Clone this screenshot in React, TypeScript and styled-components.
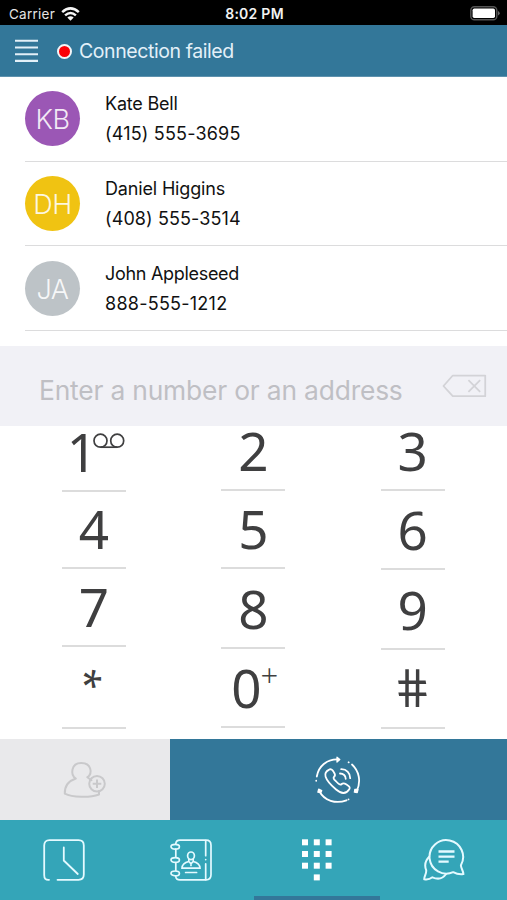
import React from "react";
import styled, { createGlobalStyle } from "styled-components";

const Global = createGlobalStyle`
  * { box-sizing: border-box; }
  body { margin: 0; background: #fff; font-family: Inter, "Liberation Sans", sans-serif; }
`;

const Screen = styled.main`
  width: 507px;
  height: 900px;
  display: flex;
  flex-direction: column;
  overflow: hidden;
  background: #fff;
`;

const StatusBar = styled.div`
  height: 25px;
  flex: none;
  display: grid;
  grid-template-columns: 1fr auto 1fr;
  align-items: center;
  padding: 3px 7px 0 9px;
  background: #000;
  color: #e4e4e4;
  font-size: 13.5px;
  line-height: 20px;
`;

const Carrier = styled.div`
  display: flex;
  align-items: center;
  gap: 6px;
  letter-spacing: 0.25px;
`;

const Clock = styled.div`
  font-weight: 600;
  font-size: 14px;
  letter-spacing: 0.25px;
  color: #f2f2f2;
`;

const BatterySlot = styled.div`
  display: flex;
  justify-content: flex-end;
  padding-bottom: 2px;
`;

const Header = styled.header`
  height: 52px;
  flex: none;
  display: flex;
  align-items: center;
  padding-left: 15px;
  background: #337799;
  border-bottom: 1px solid #5e92ae;
  color: #e3f0f8;
`;

const StatusDot = styled.span`
  width: 15px;
  height: 15px;
  margin: 1px 7px 0 19px;
  border-radius: 50%;
  border: 2px solid #f3f5f8;
  background: #fb0007;
`;

const StatusText = styled.span`
  padding-top: 1px;
  font-size: 19.5px;
  line-height: 26px;
  letter-spacing: -0.42px;
`;

const Contacts = styled.section`
  height: 269px;
  flex: none;
  padding-left: 25px;
`;

const ContactRow = styled.div`
  height: 84.7px;
  display: flex;
  align-items: center;
  gap: 25px;
  border-bottom: 1px solid #dcdcdd;
`;

const Avatar = styled.div<{ $color: string }>`
  width: 55px;
  height: 55px;
  flex: none;
  display: flex;
  align-items: center;
  justify-content: center;
  padding-top: 2px;
  border-radius: 50%;
  background: ${(p) => p.$color};
  color: rgba(255, 255, 255, 0.88);
  font-size: 27px;
  font-weight: 300;
  letter-spacing: -0.4px;
`;

const ContactInfo = styled.div`
  display: flex;
  flex-direction: column;
  padding-top: 1px;
  color: #111;
  font-size: 18px;
  line-height: 30px;
`;

const ContactLine = styled.span<{ $spacing: number }>`
  letter-spacing: ${(p) => p.$spacing}px;
`;

const AddressBar = styled.div`
  height: 80px;
  flex: none;
  display: flex;
  align-items: center;
  justify-content: space-between;
  padding: 0 20px 0 39px;
  background: #f1f1f6;
`;

const Placeholder = styled.span`
  padding-top: 8px;
  color: #bfbfc4;
  font-size: 26.4px;
  line-height: 34px;
  letter-spacing: -0.19px;
  white-space: nowrap;
`;

const Keypad = styled.section`
  height: 313px;
  flex: none;
  display: grid;
  grid-template-columns: repeat(3, 64px);
  column-gap: 95.3px;
  padding-left: 62px;
`;

const KeyColumn = styled.div`
  display: flex;
  flex-direction: column;
`;

const Key = styled.div<{ $height: number }>`
  height: ${(p) => p.$height}px;
  display: flex;
  align-items: flex-end;
  justify-content: center;
  padding-bottom: 11px;
  border-bottom: 2px solid #dcdcdc;
  color: #3f3f40;
  font-family: "Noto Sans", "Open Sans", sans-serif;
  font-size: 53px;
  line-height: 54px;
`;

const StarGlyph = styled.span`
  font-size: 39px;
  line-height: 41px;
  margin-bottom: 10px;
  transform: rotate(90deg);
  transform-origin: 50% 34%;
`;

const HashGlyph = styled.span`
  margin-bottom: 2px;
  transform: skewX(10deg) scaleX(0.93);
`;

const Plus = styled.span`
  margin: 0 -3px 26px -1px;
  font-weight: 300;
  font-size: 31px;
  line-height: 28px;
`;

const VoicemailMark = styled.svg`
  margin: 0 -4px 30px -4px;
`;

const Actions = styled.div`
  height: 81px;
  flex: none;
  display: grid;
  grid-template-columns: 169.5px 1fr;
`;

const ActionButton = styled.div<{ $primary?: boolean }>`
  display: flex;
  align-items: center;
  justify-content: center;
  background: ${(p) => (p.$primary ? "#337799" : "#e9e9eb")};
  color: ${(p) => (p.$primary ? "#fff" : "#c9c9cb")};
`;

const TabBar = styled.nav`
  height: 80px;
  flex: none;
  display: grid;
  grid-template-columns: repeat(4, 1fr);
  background: #34a5b8;
  color: #e4faff;
`;

const Tab = styled.div<{ $active?: boolean }>`
  display: flex;
  align-items: center;
  justify-content: center;
  padding: 4px 0 0 1px;
  border-bottom: 4px solid ${(p) => (p.$active ? "#337799" : "transparent")};
`;

const contacts = [
  { initials: "KB", color: "#9b57b5", name: "Kate Bell", phone: "(415) 555-3695", ns: -0.2, ps: 0.18 },
  { initials: "DH", color: "#f0c312", name: "Daniel Higgins", phone: "(408) 555-3514", ns: -0.16, ps: 0.1 },
  { initials: "JA", color: "#bdc3c7", name: "John Appleseed", phone: "888-555-1212", ns: -0.3, ps: 0.25 },
];

const keyColumns = [
  [["1", 66], ["4", 77], ["7", 78], ["*", 82]],
  [["2", 65], ["5", 78], ["8", 80], ["0", 79]],
  [["3", 65], ["6", 79], ["9", 79.5], ["#", 79]],
] as [string, number][][];

const WifiIcon = () => (
  <svg width="19" height="15" viewBox="0 0 19 15" fill="none" stroke="#f4f4f4" strokeWidth="2.5">
    <path d="M1.2 5.2Q9.5-2.4 17.8 5.2" />
    <path d="M4.1 8.4Q9.5 3.6 14.9 8.4" />
    <path d="M9.5 13.8 6.3 10.5Q9.5 7.8 12.7 10.5Z" fill="#f4f4f4" stroke="none" />
  </svg>
);

const BatteryIcon = () => (
  <svg width="30" height="15" viewBox="0 0 30 15">
    <rect x="0.8" y="0.8" width="26" height="13" rx="3.6" fill="none" stroke="#555" strokeWidth="1.4" />
    <rect x="2.6" y="2.6" width="22.4" height="9.4" rx="1.7" fill="#fff" />
    <path d="M28 5v4.6Q29.7 8.8 29.7 7.3T28 5Z" fill="#666" />
  </svg>
);

const MenuIcon = () => (
  <svg width="23" height="24" viewBox="0 0 23 24" stroke="currentColor" strokeWidth="2.1">
    <path d="M0 1.8h23M0 8.5h23M0 15.2h23M0 21.9h23" />
  </svg>
);

const BackspaceIcon = () => (
  <svg width="45" height="24" viewBox="0 0 46 24" fill="none" stroke="#d3d3d7" strokeWidth="1.8">
    <path d="M1.5 12 11 1.3H44.2V22.4H11Z" strokeLinejoin="round" />
    <path d="m27 6 12 12m0-12L27 18" />
  </svg>
);

const AddContactIcon = () => (
  <svg width="43" height="38" viewBox="0 0 43 38" fill="none" stroke="currentColor" strokeWidth="2">
    <path d="M12.8 17.5C7.2 14 7.8 2 18.2 2S29.5 12 24.8 16.3M12.8 17.5C5.5 20 1.5 24.5 1.8 32.7 9 36.5 27 37 36 33.5V30M24.3 16.2 28.5 19.2" strokeLinejoin="round" strokeLinecap="round" />
    <circle cx="34" cy="22.8" r="7.8" />
    <path d="M34 18.5v8.6M29.7 22.8h8.6" />
  </svg>
);

const CallIcon = () => (
  <svg width="46" height="48" viewBox="0 0 46 48" fill="none" stroke="currentColor" strokeWidth="1.8" strokeLinecap="round">
    <path d="M1.8 20.5C3.5 10 12 3.4 22 3.4M37 8.5c7 6.5 9.3 16.8 4.8 26.3M31.5 44.3C20.5 48.4 9.3 44.5 4.5 35.5" />
    <path d="m22 1.2 2.8 2.2L22 6Z M39.8 33.5h3.2l-.8 3.1-2.8-.5Z M2.9 36.2l.8-3 3 1.4-1 2Z" fill="currentColor" strokeWidth="1.3" strokeLinejoin="round" />
    <path d="M1.2 24.7v.1M33.6 6.3l.1.1M33.5 43.3v.1" />
    <path d="M14.2 13.6c1.5-1 3.2.2 4.4 2.2 1.2 1.8 2.4 3.2.7 4.7-1.6 1.5-.5 2.5 1.9 5 2.6 2.7 4 4 5.5 2.5s2.7-.9 4.8.5c2.6 1.7 4.1 2.7 2.8 4.7-3.5 5.3-8 4.7-13.2.3-4.7-4-9.1-8.3-10.5-12.8-.9-3 .9-5.8 3.6-7.1Z" strokeLinejoin="round" />
    <path d="M26.2 13.2c5.5-.1 9.1 4 9 9M25 17.5c3.4 0 5.8 2.3 5.7 5.3" />
  </svg>
);

const RecentIcon = () => (
  <svg width="42" height="42" viewBox="0 0 42 42" fill="none" stroke="currentColor" strokeWidth="1.8" strokeLinecap="round">
    <path d="M6 40.8C2.5 41 1.2 39.5 1.2 36V6.5Q1.2 1.2 6.5 1.2h29Q40.8 1.2 40.8 6.5V35.5Q40.8 40.8 35.5 40.8H14.5" />
    <path d="M20.8 8.5v13L34.8 35" />
  </svg>
);

const ContactsIcon = () => (
  <svg width="42" height="42" viewBox="0 0 42 42" fill="none" stroke="currentColor" strokeWidth="1.7" strokeLinecap="round">
    <path d="M5.8 4.8Q6 1.2 10 1.2h26q5 0 5 5v29.6q0 5-5 5H10Q5.8 40.8 5.8 37.6M5.8 10v8M5.8 24v7.5" />
    <path d="M35.7 1.5v15.2M35.7 24.8v15.8M35.7 20.5v.1" />
    <ellipse cx="5.2" cy="7.7" rx="4.2" ry="2.4" />
    <ellipse cx="5.2" cy="21" rx="4.2" ry="2.4" />
    <ellipse cx="5.2" cy="34.4" rx="4.2" ry="2.4" />
    <ellipse cx="21" cy="16.8" rx="3.4" ry="3.8" />
    <path d="M18.8 20.3v2.2c-4.2 1-6.7 3-6.8 6.7h18c-.1-3.7-2.6-5.7-6.8-6.7v-2.2M18.8 22.5l2.2 2.2 2.2-2.2M21 24.7v1.7M15.6 33.5h11" />
  </svg>
);

const KeypadIcon = () => (
  <svg width="30" height="42" viewBox="0 0 30 42" fill="#fff">
    {[0, 11.7, 23.4].map((y) =>
      [0, 11.8, 23.6].map((x) => <rect key={`${x}-${y}`} x={x} y={y + 0.3} width="6" height="6" />)
    )}
    <rect x="11.8" y="35.4" width="6" height="6" />
  </svg>
);

const ChatIcon = () => (
  <svg width="42" height="42" viewBox="0 0 42 42" fill="none" stroke="currentColor" strokeWidth="2" strokeLinejoin="round" strokeLinecap="round">
    <path d="M37.9 26.2A16.8 16.8 0 1 0 30.2 33.2C33 34.7 36.2 35.7 40.4 35.1 40.5 32 37.9 29.5 37.9 26.2Z" />
    <path d="M6.2 17.8C3 21 1.2 26.2 3.2 31.2 3.7 34.6 1.1 37 1.2 40.3 4.8 41 7.5 39.8 9.4 38.3 14.8 40.7 20 39.3 23.1 35" />
    <path d="M15.5 12.5h16M15.5 17.6h16M15.5 22.6h10.2" strokeWidth="2.4" strokeLinecap="butt" />
  </svg>
);

const KeyLabel = ({ label }: { label: string }) => {
  if (label === "*") return <StarGlyph>*</StarGlyph>;
  if (label === "#") return <HashGlyph>#</HashGlyph>;
  return <span>{label}</span>;
};

export default function App() {
  return (
    <>
      <Global />
      <Screen>
        <StatusBar>
          <Carrier>Carrier <WifiIcon /></Carrier>
          <Clock>8:02 PM</Clock>
          <BatterySlot><BatteryIcon /></BatterySlot>
        </StatusBar>
        <Header>
          <MenuIcon />
          <StatusDot />
          <StatusText>Connection failed</StatusText>
        </Header>
        <Contacts>
          {contacts.map((c) => (
            <ContactRow key={c.initials}>
              <Avatar $color={c.color}>{c.initials}</Avatar>
              <ContactInfo>
                <ContactLine $spacing={c.ns}>{c.name}</ContactLine>
                <ContactLine $spacing={c.ps}>{c.phone}</ContactLine>
              </ContactInfo>
            </ContactRow>
          ))}
        </Contacts>
        <AddressBar>
          <Placeholder>Enter a number or an address</Placeholder>
          <BackspaceIcon />
        </AddressBar>
        <Keypad>
          {keyColumns.map((column, i) => (
            <KeyColumn key={i}>
              {column.map(([label, height]) => (
                <Key key={label} $height={height}>
                  <KeyLabel label={label} />
                  {label === "1" && (
                    <VoicemailMark width="32" height="16" viewBox="0 0 32 16" fill="none" stroke="#3f3f40" strokeWidth="1.7">
                      <circle cx="7.5" cy="7.7" r="6.5" />
                      <circle cx="24.2" cy="7.7" r="6.5" />
                      <path d="M7.5 14.2h16.7" />
                    </VoicemailMark>
                  )}
                  {label === "0" && <Plus>+</Plus>}
                </Key>
              ))}
            </KeyColumn>
          ))}
        </Keypad>
        <Actions>
          <ActionButton><AddContactIcon /></ActionButton>
          <ActionButton $primary><CallIcon /></ActionButton>
        </Actions>
        <TabBar>
          <Tab><RecentIcon /></Tab>
          <Tab><ContactsIcon /></Tab>
          <Tab $active><KeypadIcon /></Tab>
          <Tab><ChatIcon /></Tab>
        </TabBar>
      </Screen>
    </>
  );
}
